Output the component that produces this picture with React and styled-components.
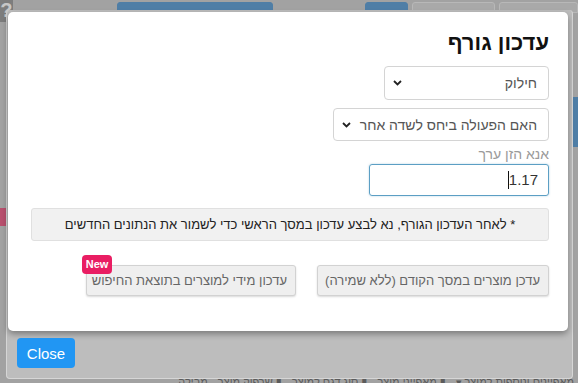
import React from "react";
import styled, { createGlobalStyle } from "styled-components";

const GlobalStyle = createGlobalStyle`
  html, body {
    margin: 0;
    padding: 0;
    overflow: hidden;
    background: #a2a2a2;
  }
  * {
    box-sizing: border-box;
  }
`;

const FONT = `"Liberation Sans", "DejaVu Sans", Arial, sans-serif`;

const Page = styled.div`
  position: relative;
  width: 578px;
  height: 383px;
  overflow: hidden;
  font-family: ${FONT};
  background: #a2a2a2;
  display: flex;
  flex-direction: column;
`;

/* ---- dimmed page behind the dialog ---- */
const TopBar = styled.div`
  height: 13px;
  display: flex;
  align-items: flex-start;
  gap: 4px;
  padding-top: 2px;
`;

const HelpMark = styled.div`
  width: 13px;
  height: 22px;
  margin-top: -2px;
  font-weight: bold;
  font-size: 20px;
  line-height: 20px;
  text-align: center;
  background: #7d7d7d;
  border-radius: 0 0 6px 0;
  color: #c7c7c7;
`;

const Tab = styled.div`
  height: 11px;
  width: ${(p) => p.$w}px;
  margin-left: ${(p) => p.$ml || 0}px;
  background: ${(p) => (p.$blue ? "#4f7ea6" : "#a9a9a9")};
  border: 1px solid ${(p) => (p.$blue ? "#4f7ea6" : "#b8b8b8")};
  border-radius: 3px 3px 0 0;
`;

const Middle = styled.div`
  flex: 1;
  display: flex;
  justify-content: space-between;
`;

const SideStrip = styled.div`
  width: 6px;
  display: flex;
  flex-direction: column;
  padding-top: ${(p) => p.$pt}px;
  gap: 6px;
`;

const SideMark = styled.div`
  height: ${(p) => p.$h}px;
  background: ${(p) => p.$c};
`;

const BottomBar = styled.div`
  height: 7px;
  display: flex;
  direction: rtl;
  gap: 10px;
  white-space: nowrap;
  font-size: 11px;
  line-height: 12px;
  color: #5b5b5b;
  padding-right: 4px;
`;

/* ---- dialog ---- */
const Overlay = styled.div`
  position: absolute;
  inset: 0;
`;

const Frame = styled.div`
  position: absolute;
  left: 6px;
  top: 10px;
  width: 567px;
  height: 369px;
  background: #bdbdbd;
  border: 1px solid #d6d6d6;
  border-top: none;
  border-radius: 4px;
  padding: 2px 4px 0 1px;
  display: flex;
  flex-direction: column;
  gap: 7px;
`;

const Modal = styled.div`
  direction: rtl;
  background: #fff;
  border-radius: 5px;
  height: 319px;
  padding: 18px 19px 0 21px;
  box-shadow: 0 3px 6px rgba(0, 0, 0, 0.35);
  display: flex;
  flex-direction: column;
  align-items: flex-start;
`;

const Title = styled.h2`
  margin: 0;
  font-size: 22px;
  line-height: 26px;
  font-weight: bold;
  color: #111;
`;

const Select = styled.div`
  width: ${(p) => p.$w}px;
  height: ${(p) => p.$h}px;
  margin-top: ${(p) => p.$mt}px;
  border: 1px solid #d4d4d4;
  border-radius: 4px;
  display: flex;
  align-items: center;
  justify-content: space-between;
  padding: 0 11px 0 8px;
  font-size: 14px;
  white-space: nowrap;
  color: #555;
`;

const Chevron = () => (
  <svg width="9" height="6" viewBox="0 0 9 6">
    <path d="M1 1l3.5 3.5L8 1" fill="none" stroke="#222" strokeWidth="1.8" />
  </svg>
);

const Label = styled.div`
  margin-top: 4px;
  font-size: 14px;
  line-height: 18px;
  color: #9a9a9a;
`;

const Field = styled.div`
  margin-top: 1px;
  width: 180px;
  height: 32px;
  border: 1px solid #5c9fc4;
  border-radius: 3px;
  box-shadow: 0 0 2px rgba(92, 159, 196, 0.5);
  display: flex;
  align-items: center;
  padding-right: 10px;
  font-size: 15px;
  color: #333;
`;

const Value = styled.span`
  direction: ltr;
  border-left: 1px solid #111;
  line-height: 18px;
`;

const Note = styled.div`
  margin-top: 12px;
  width: 518px;
  height: 33px;
  background: #f1f1f1;
  border: 1px solid #e0e0e0;
  border-radius: 3px;
  display: flex;
  align-items: center;
  justify-content: center;
  font-size: 13px;
  white-space: nowrap;
  color: #222;
`;

const Actions = styled.div`
  margin-top: 24px;
  display: flex;
  gap: 21px;
`;

const ButtonWrap = styled.div`
  position: relative;
`;

const ActionButton = styled.button`
  width: ${(p) => p.$w}px;
  height: 31px;
  direction: rtl;
  font-family: ${FONT};
  font-size: 13px;
  color: #666;
  background: #efefef;
  border: 1px solid #d2d2d2;
  border-radius: 3px;
  box-shadow: 0 1px 2px rgba(0, 0, 0, 0.15);
  padding: 0 8px;
  white-space: nowrap;
`;

const Badge = styled.span`
  position: absolute;
  left: -4px;
  top: -10px;
  width: 30px;
  height: 19px;
  direction: ltr;
  background: #e91e63;
  color: #fff;
  border-radius: 4px;
  font-size: 11px;
  font-weight: bold;
  line-height: 19px;
  text-align: center;
`;

const CloseButton = styled.button`
  margin-left: 9px;
  width: 58px;
  height: 30px;
  background: #2196f3;
  color: #fff;
  border: none;
  border-radius: 4px;
  font-family: ${FONT};
  font-size: 15px;
`;

export default function App() {
  return (
    <>
      <GlobalStyle />
      <Page>
        <TopBar>
          <HelpMark>?</HelpMark>
          <Tab $w={158} $ml={100} $blue />
          <Tab $w={44} $ml={88} $blue />
          <Tab $w={84} />
          <Tab $w={80} />
        </TopBar>
        <Middle>
          <SideStrip $pt={195}>
            <SideMark $h={18} $c="#b8506e" />
          </SideStrip>
          <SideStrip $pt={84}>
            <SideMark $h={50} $c="#4f7ea6" />
          </SideStrip>
        </Middle>
        <BottomBar>
          <span>מאפיינים ונוספות למוצר ▾</span>
          <span>▮ מאפייני מוצר</span>
          <span>▮ סוג דגם למוצר</span>
          <span>▮ שרפוק מוצר</span>
          <span>מבילה</span>
        </BottomBar>

        <Overlay>
          <Frame>
            <Modal>
              <Title>עדכון גורף</Title>
              <Select $w={165} $h={34} $mt={10}>
                <span>חילוק</span>
                <Chevron />
              </Select>
              <Select $w={216} $h={33} $mt={8}>
                <span>האם הפעולה ביחס לשדה אחר</span>
                <Chevron />
              </Select>
              <Label>אנא הזן ערך</Label>
              <Field>
                <Value>1.17</Value>
              </Field>
              <Note>
                * לאחר העדכון הגורף, נא לבצע עדכון במסך הראשי כדי לשמור את הנתונים החדשים
              </Note>
              <Actions>
                <ButtonWrap>
                  <ActionButton $w={232}>עדכן מוצרים במסך הקודם (ללא שמירה)</ActionButton>
                </ButtonWrap>
                <ButtonWrap>
                  <ActionButton $w={210}>עדכון מידי למוצרים בתוצאת החיפוש</ActionButton>
                  <Badge>New</Badge>
                </ButtonWrap>
              </Actions>
            </Modal>
            <div>
              <CloseButton>Close</CloseButton>
            </div>
          </Frame>
        </Overlay>
      </Page>
    </>
  );
}
